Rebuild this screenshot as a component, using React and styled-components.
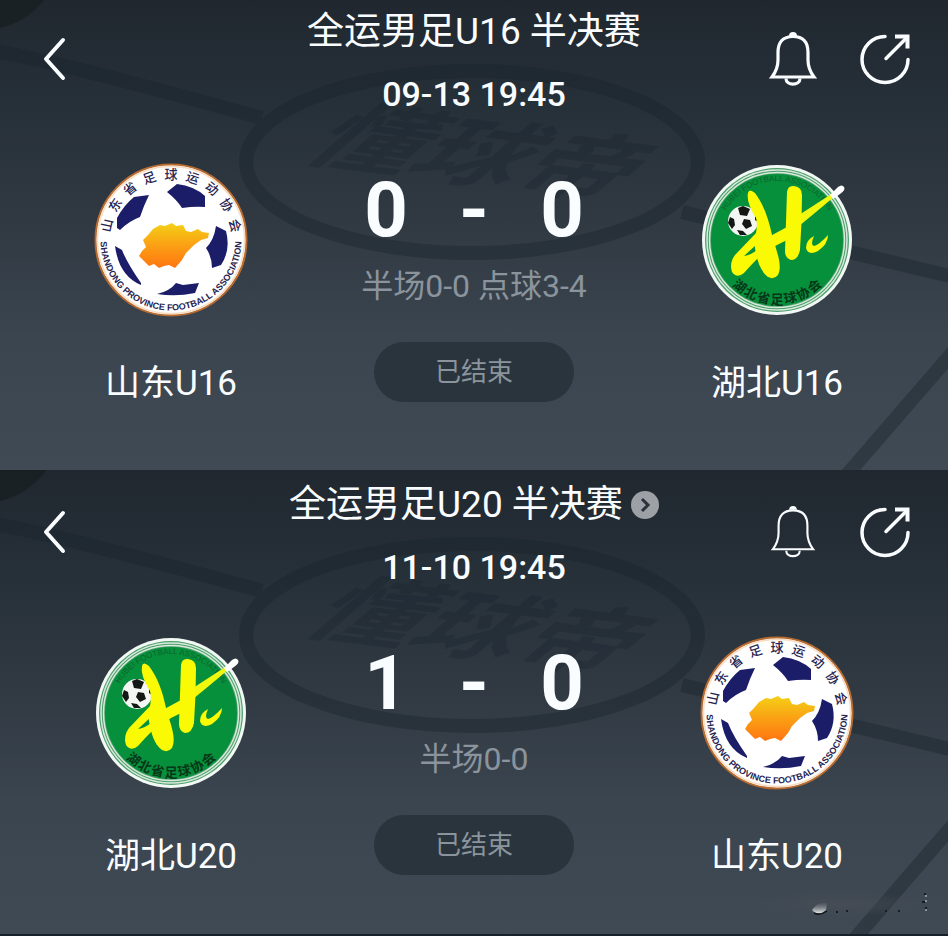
import React, { useId } from 'react';
import styled, { createGlobalStyle } from 'styled-components';

const GlobalStyle = createGlobalStyle`
  *, *::before, *::after { box-sizing: border-box; }
  body {
    margin: 0;
    background: #182029;
    color: #fafdff;
    font-family: Roboto, "Noto Sans CJK SC", sans-serif;
  }
`;

const Page = styled.main`
  display: flex;
  flex-direction: column;
`;

const Panel = styled.section`
  position: relative;
  isolation: isolate;
  overflow: hidden;
  padding: ${(p) => (p.$last ? '3px 0 55px' : '0 0 64px')};
  background: linear-gradient(#20272f 0%, #263039 22%, #303942 46%, #3b454f 72%, #3f4a54 100%);
  border-bottom: ${(p) => (p.$last ? '2px solid #182029' : 'none')};
`;

const Backdrop = styled.svg`
  position: absolute;
  z-index: -1;
  top: ${(p) => (p.$last ? 3 : 0)}px;
  left: 50%;
  width: 948px;
  height: 470px;
  margin-left: -474px;
  overflow: visible;
`;

const Smudge = styled.svg`
  position: absolute;
  right: 16px;
  bottom: 14px;
`;

const Header = styled.header`
  display: grid;
  grid-template-columns: 1fr auto 1fr;
  padding: 10px 36px 0;
`;

const Heading = styled.div`
  display: flex;
  flex-direction: column;
  align-items: center;
  gap: 18px;
`;

const TitleRow = styled.div`
  display: flex;
  align-items: center;
  gap: 8px;
`;

const Title = styled.h1`
  margin: 0;
  font-size: 37px;
  font-weight: 400;
  line-height: 44px;
`;

const Kickoff = styled.time`
  font-size: 34px;
  font-weight: 500;
  line-height: 44px;
`;

const IconButton = styled.button`
  display: grid;
  place-items: center;
  padding: 0;
  border: 0;
  background: none;
  color: inherit;
  cursor: pointer;
`;

const BackButton = styled(IconButton)`
  justify-self: start;
  align-self: start;
  margin-top: 24px;
`;

const MoreButton = styled(IconButton)`
  width: 28px;
  height: 28px;
  border-radius: 50%;
  background: #9da1a6;
  color: #29313a;
`;

const Actions = styled.div`
  display: flex;
  justify-self: end;
  align-self: start;
  gap: 40px;
  margin-top: 20px;
`;

const Match = styled.div`
  display: grid;
  grid-template-columns: 1fr 264px 1fr;
  padding-top: 44px;
`;

const Team = styled.div`
  display: flex;
  flex-direction: column;
  align-items: center;
  gap: 44px;
  padding-top: 2px;
`;

const TeamName = styled.h2`
  margin: 0;
  font-size: 35px;
  font-weight: 400;
  line-height: 44px;
`;

const Result = styled.div`
  display: flex;
  flex-direction: column;
  align-items: center;
`;

const Score = styled.div`
  display: grid;
  grid-template-columns: repeat(3, 88px);
  padding-top: 12px;
  text-align: center;
  font-size: 76px;
  font-weight: 700;
  line-height: 76px;
`;

const Detail = styled.p`
  margin: 16px 0 34px;
  color: #8b949d;
  font-size: 32px;
  line-height: 44px;
  white-space: nowrap;
`;

const Status = styled.span`
  width: 200px;
  border-radius: 30px;
  background: #2a343d;
  color: #8b949d;
  font-size: 26px;
  line-height: 60px;
  text-align: center;
`;

const Crest = styled.svg`
  display: block;
  overflow: visible;
`;

function PitchBackdrop({ last }) {
  return (
    <Backdrop $last={last} viewBox="0 0 948 470" aria-hidden="true">
      <path
        d="M-10 50Q60 62 262 118M682 212 958 278M960 344 832 492M246 162a226 91 0 1 0 452 0a226 91 0 1 0 -452 0"
        fill="none"
        stroke="#18222a"
        strokeOpacity="0.4"
        strokeWidth="14"
      />
      <path d="M0-8H50Q32 20 0 28Z" fill="#161c1e" fillOpacity="0.6" />
      <text
        transform="matrix(1 0.13 -0.75 0.65 298 158)"
        fill="#17212a"
        fillOpacity="0.3"
        fontFamily="Noto Sans CJK SC, sans-serif"
        fontSize="104"
        fontWeight="700"
      >
        懂球帝
      </text>
    </Backdrop>
  );
}

function CornerSmudge() {
  const id = useId();
  return (
    <Smudge width="184" height="32" viewBox="0 0 184 32" aria-hidden="true">
      <defs>
        <radialGradient id={`${id}haze`}>
          <stop offset="0" stopColor="#4a4e56" stopOpacity="0.6" />
          <stop offset="1" stopColor="#4a4e56" stopOpacity="0" />
        </radialGradient>
        <linearGradient id={`${id}drop`} x1="0" y1="0" x2="0" y2="1">
          <stop offset="0" stopColor="#5d6369" stopOpacity="0.3" />
          <stop offset="1" stopColor="#eceeee" />
        </linearGradient>
      </defs>
      <ellipse cx="92" cy="16" rx="90" ry="13" fill={`url(#${id}haze)`} />
      <path d="M64 22Q70 13 79 15L78 22Q70 29 64 22Z" fill={`url(#${id}drop)`} />
      <path d="M66 25Q72 28 79 23" fill="none" stroke="#13181d" strokeWidth="1.500" />
      <path d="M88 24h2M98 23h2M137 23h2M150 23h2M174 14h3M176 6h2M177 20h2" stroke="#161c22" strokeWidth="2" />
      <path d="M177 8h2M177 13h2M177 22h2" stroke="#d5dade" strokeWidth="1" />
    </Smudge>
  );
}

function BackIcon() {
  return (
    <svg width="36" height="50" viewBox="0 0 36 50" aria-hidden="true">
      <path d="M27 6 10 25 27 44" fill="none" stroke="currentColor" strokeWidth="4" strokeLinecap="round" strokeLinejoin="round" />
    </svg>
  );
}

function BellIcon({ thin }) {
  return (
    <svg width="50" height="56" viewBox={thin ? '-1 -1 52 58' : '0 0 50 56'} aria-hidden="true">
      <g fill="none" stroke="currentColor" strokeWidth={thin ? 2.2 : 3.2}>
        <path d="M4 47Q10 39 10 30V22.500C10 12 15 6.500 25 6.500S40 12 40 22.500V30Q40 39 46 47Z" />
        <path d="M18 48.500C18 56 32 56 32 48.500" />
      </g>
      <path d="M21 6Q21 2 25 2T29 6Z" fill="currentColor" />
    </svg>
  );
}

function ShareIcon() {
  return (
    <svg width="54" height="56" viewBox="0 0 54 56" aria-hidden="true">
      <g fill="none" stroke="currentColor" strokeWidth="3.500" strokeLinecap="round">
        <path d="M27 6.500A23 23 0 1 0 50 29.500" />
        <path d="M28 28.500 49 7.500" />
        <path d="M37 6.500H49.500V18.500" strokeLinecap="butt" strokeWidth="4" />
      </g>
    </svg>
  );
}

function ChevronIcon() {
  return (
    <svg width="16" height="18" viewBox="0 0 16 18" aria-hidden="true">
      <path d="M5 3 11 9 5 15" fill="none" stroke="currentColor" strokeWidth="3" />
    </svg>
  );
}

function ArcLetters({ text, step, baseline, fill, weight }) {
  const middle = (text.length - 1) / 2;
  return (
    <g fill={fill} fontFamily="Noto Sans CJK SC, sans-serif" fontSize="13" fontWeight={weight} textAnchor="middle">
      {[...text].map((char, i) => (
        <text key={char} x="78" y={baseline} transform={`rotate(${(i - middle) * step} 78 78)`}>
          {char}
        </text>
      ))}
    </g>
  );
}

function ShandongCrest() {
  const id = useId();
  return (
    <Crest width="156" height="156" viewBox="0 0 156 156" role="img" aria-label="山东省足球运动协会">
      <defs>
        <linearGradient id={`${id}land`} x1="0" y1="0" x2="0" y2="1">
          <stop offset="0" stopColor="#f3d016" />
          <stop offset="0.5" stopColor="#fba014" />
          <stop offset="1" stopColor="#ff7511" />
        </linearGradient>
        <path id={`${id}bottom`} d="M7.500 78A70.500 70.500 0 0 0 148.500 78" />
      </defs>
      <circle cx="78" cy="78" r="75.500" fill="#fff" stroke="#b86b30" strokeWidth="2" />
      <circle cx="78" cy="78" r="73.500" fill="none" stroke="#f7dcc0" strokeWidth="1.500" />
      <g fill="#1c1d68">
        <path d="M24 56Q31 43 41 35L56 33Q51 43 47 55Q36 59 27 68L24 66Z" />
        <path d="M74 30 84 22Q101 24 112 34V45Q102 44 89 46Q84 38 74 30Z" />
        <path d="M113 86Q121 78 123 64L133 69Q138 88 128 103L119 106Q119 95 113 86Z" />
        <path d="M22 84 29 88Q34 101 48 121V123Q26 114 22 84Z" />
        <path d="M64 132Q77 129 83 121L90 123 106 121 102 131Q83 135 64 132Z" />
      </g>
      <path
        d="m46 94 3-5 4-4-3-7 5-5 5-6 7-4 5 1 7-3 4 3 7-1 3 6 5 1 7-3 4 3 7 1-1 5-7 2-7 5-5 5-3 3-4 7-7 8-6-3-5 1-5 2-5-4-5 2Z"
        fill={`url(#${id}land)`}
      />
      <ArcLetters text="山东省足球运动协会" step={19.3} baseline={17} fill="#272451" weight="500" />
      <text fill="#272451" fontFamily="Liberation Sans, sans-serif" fontSize="9" fontWeight="700">
        <textPath href={`#${id}bottom`} startOffset="50%" textAnchor="middle">
          SHANDONG PROVINCE FOOTBALL ASSOCIATION
        </textPath>
      </text>
    </Crest>
  );
}

function HubeiCrest() {
  const id = useId();
  return (
    <Crest width="156" height="156" viewBox="0 0 156 156" role="img" aria-label="湖北省足球协会">
      <defs>
        <path id={`${id}top`} d="M19 78A59 59 0 0 1 137 78" />
      </defs>
      <circle cx="78" cy="78" r="75" fill="#f2f8f4" />
      <circle cx="78" cy="78" r="72" fill="#4d9e6b" />
      <circle cx="78" cy="78" r="70" fill="none" stroke="#d7eadb" strokeWidth="1.500" />
      <circle cx="78" cy="78" r="67.500" fill="none" stroke="#d7eadb" strokeWidth="1.500" />
      <circle cx="78" cy="78" r="66" fill="#06903b" />
      <text fill="#0c642c" fontFamily="Liberation Sans, sans-serif" fontSize="8">
        <textPath href={`#${id}top`} startOffset="50%" textAnchor="middle">HUBEI FOOTBALL ASSOCIATION</textPath>
      </text>
      <path d="M100 53Q120 40 134 31L136 34Q122 46 100 64Z" fill="#f0f80f" />
      <path d="M131 33 139 25Q143 22 145 25T141 32L134 37Z" fill="#fff" />
      <circle cx="44" cy="59" r="15" fill="#f4f6f4" />
      <g fill="#131815">
        <path d="m39 46 5-2 7 3-3 7-7-1Z" />
        <path d="m45 57 6 1 2 6-6 3-4-5Z" />
        <path d="m31 55 4 2 1 6-3 4-4-6Z" />
        <path d="m56 51 3 4 1 6-4-3Z" />
        <path d="m38 68 6 1 4 4-7 0Z" />
      </g>
      <g fill="#fafa05">
        <path d="M49 31Q50 26 56 31C65 43 70 58 73 73C77 88 84 103 79 113Q75 118 69 115C61 109 58 98 56 86C54 76 60 68 57 56Q47 40 49 31Z" />
        <path d="M88 30Q89 23 95 24Q103 25 103 33Q103 60 101 88Q99 98 92 98Q86 96 86 89Z" />
        <path
          fillRule="evenodd"
          d="M58 70 64 78 88 65H94V75L78 83 62 93Q52 103 45 111Q38 117 33 110Q30 101 36 93ZM58 82 45 94Q52 93 58 88Z"
        />
        <path d="M115 74Q111 83 115 84Q120 83 129 73Q129 82 119 89Q109 94 107 86Q107 78 115 74Z" />
      </g>
      <ArcLetters text="湖北省足球协会" step={-13} baseline={142} fill="#063617" weight="700" />
    </Crest>
  );
}

const crests = { shandong: ShandongCrest, hubei: HubeiCrest };

const matches = [
  {
    title: '全运男足U16 半决赛',
    time: '09-13 19:45',
    home: { name: '山东U16', crest: 'shandong' },
    away: { name: '湖北U16', crest: 'hubei' },
    score: [0, 0],
    detail: '半场0-0 点球3-4',
  },
  {
    title: '全运男足U20 半决赛',
    time: '11-10 19:45',
    home: { name: '湖北U20', crest: 'hubei' },
    away: { name: '山东U20', crest: 'shandong' },
    score: [1, 0],
    detail: '半场0-0',
    more: true,
  },
];

function TeamBlock({ team }) {
  const CrestImage = crests[team.crest];
  return (
    <Team>
      <CrestImage />
      <TeamName>{team.name}</TeamName>
    </Team>
  );
}

function MatchPanel({ match, last }) {
  return (
    <Panel $last={last}>
      <PitchBackdrop last={last} />
      <Header>
        <BackButton type="button" aria-label="返回"><BackIcon /></BackButton>
        <Heading>
          <TitleRow>
            <Title>{match.title}</Title>
            {match.more && <MoreButton type="button" aria-label="更多"><ChevronIcon /></MoreButton>}
          </TitleRow>
          <Kickoff>{match.time}</Kickoff>
        </Heading>
        <Actions>
          <IconButton type="button" aria-label="提醒"><BellIcon thin={last} /></IconButton>
          <IconButton type="button" aria-label="分享"><ShareIcon /></IconButton>
        </Actions>
      </Header>
      <Match>
        <TeamBlock team={match.home} />
        <Result>
          <Score>
            <span>{match.score[0]}</span>
            <span>-</span>
            <span>{match.score[1]}</span>
          </Score>
          <Detail>{match.detail}</Detail>
          <Status>已结束</Status>
        </Result>
        <TeamBlock team={match.away} />
      </Match>
      {last && <CornerSmudge />}
    </Panel>
  );
}

export default function App() {
  return (
    <>
      <GlobalStyle />
      <Page>
        {matches.map((match, i) => (
          <MatchPanel key={match.title} match={match} last={i === matches.length - 1} />
        ))}
      </Page>
    </>
  );
}
